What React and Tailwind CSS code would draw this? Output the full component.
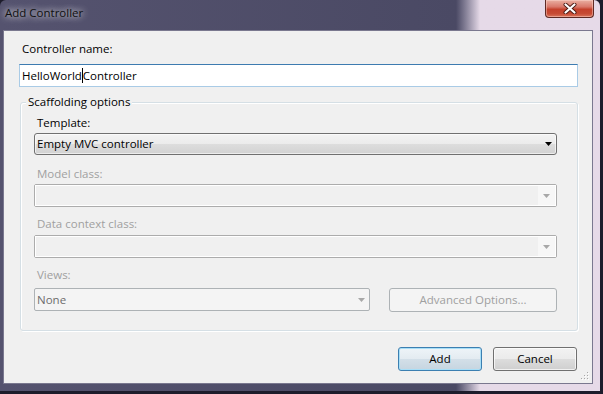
import React from "react";

const font = { fontFamily: '"Open Sans", "Noto Sans", "Liberation Sans", sans-serif' };

function Arrow({ color = "#000" }) {
  return (
    <svg width="7" height="4" viewBox="0 0 7 4" className="shrink-0">
      <path d="M0 0 H7 L3.5 4 Z" fill={color} />
    </svg>
  );
}

function DisabledCombo() {
  return (
    <div className="h-[23px] rounded-[2px] border border-[#acacac] flex">
      <div className="flex-1 border border-white border-r-0 bg-[#f0f0f0]" />
      <div className="w-[18px] border border-white border-l-0 bg-[#f7f7f7] flex items-center justify-center">
        <Arrow color="#a8a8a8" />
      </div>
    </div>
  );
}

export default function App() {
  return (
    <div
      className="w-[603px] h-[394px] bg-[#1d1c2b] overflow-hidden text-[11.5px] text-black"
      style={font}
    >
      <div className="w-[600px] h-[391px] flex flex-col rounded-t-[6px] bg-linear-to-r from-[#55536f] from-0% via-[#4a4964] via-76% to-[#e6dae8] to-80%">
        {/* title bar */}
        <div className="h-[30px] flex items-start justify-between">
          <span className="pl-[5px] pt-[5px] leading-[16px] text-[#101010] [text-shadow:0_0_6px_rgba(255,255,255,0.9),0_0_10px_rgba(255,255,255,0.6)]">
            Add Controller
          </span>
          <div className="mr-[6px] w-[49px] h-[18px] rounded-b-[4px] border border-t-0 border-[#5e2a24] bg-[linear-gradient(180deg,#eab0a2_0%,#d9786a_40%,#c4412c_55%,#c64b34_80%,#d9745c_100%)] shadow-[inset_0_0_0_1px_rgba(255,220,210,0.45)] flex items-center justify-center">
            <svg width="14" height="11" viewBox="0 0 14 11">
              <path d="M2.5 1.5 L11.5 9.5 M11.5 1.5 L2.5 9.5" stroke="#4a1a14" strokeWidth="4" strokeLinecap="round" />
              <path d="M2.5 1.5 L11.5 9.5 M11.5 1.5 L2.5 9.5" stroke="#ffffff" strokeWidth="2.2" strokeLinecap="round" />
            </svg>
          </div>
        </div>

        {/* client area */}
        <div className="ml-[3px] mr-[7px] h-[354px] border border-[#7a788f] bg-[#f0f0f0] relative">
          <div className="flex flex-col pl-[15px] pr-[14px] pt-[10px]">
            <div className="ml-[3px] leading-[16px]">Controller name:</div>
            <div className="mt-[7px] h-[23px] bg-white border border-[#a9cbe6] border-t-[#3d7bb0] flex items-center pl-[2px] leading-[16px]">
              <span>HelloWorld</span>
              <span className="inline-block w-[1px] h-[15px] bg-black" />
              <span>Controller</span>
            </div>

            {/* group box */}
            <div className="mt-[15px] ml-[1px] relative border border-[#d5dfe5] rounded-[3px] shadow-[inset_1px_1px_0_#ffffff,1px_1px_0_#ffffff] pl-[13px] pr-[20px] pt-[12px] pb-[18px] flex flex-col">
              <span className="absolute left-[5px] -top-[9px] px-[2px] bg-[#f0f0f0] leading-[16px]">
                Scaffolding options
              </span>

              <div className="ml-[3px] leading-[16px]">Template:</div>
              <div className="mt-[2px] h-[22px] rounded-[3px] border border-[#707070] bg-[linear-gradient(180deg,#f3f3f3_0%,#ebebeb_50%,#dddddd_50%,#d2d2d2_100%)] shadow-[inset_0_0_0_1px_rgba(255,255,255,0.6)] flex items-center justify-between pl-[2px] pr-[4px]">
                <span className="leading-[16px]">Empty MVC controller</span>
                <Arrow />
              </div>

              <div className="mt-[11px] ml-[3px] leading-[16px] text-[#a0a0a0]">Model class:</div>
              <div className="mt-[2px]">
                <DisabledCombo />
              </div>

              <div className="mt-[9px] ml-[3px] leading-[16px] text-[#a0a0a0]">Data context class:</div>
              <div className="mt-[3px]">
                <DisabledCombo />
              </div>

              <div className="mt-[9px] ml-[3px] leading-[16px] text-[#a0a0a0]">Views:</div>
              <div className="mt-[5px] h-[24px] flex items-start">
                <div className="w-[336px] h-[23px] rounded-[2px] border border-[#adb2b5] bg-[#f4f4f4] flex items-center justify-between pl-[2px] pr-[4px]">
                  <span className="leading-[16px] text-[#6d6d6d]">None</span>
                  <Arrow color="#a8a8a8" />
                </div>
                <div className="ml-[19px] flex-1 h-[24px] rounded-[3px] border border-[#adb2b5] bg-[#f4f4f4] flex items-center justify-center leading-[16px] text-[#a0a0a0]">
                  Advanced Options...
                </div>
              </div>
            </div>

            {/* buttons */}
            <div className="mt-[16px] flex justify-end gap-[11px] pr-[1px]">
              <div className="w-[84px] h-[24px] rounded-[3px] border border-[#3c7fb1] bg-[linear-gradient(180deg,#eef4f8_0%,#e3ebf1_50%,#d3dfe8_50%,#c6d5e0_100%)] shadow-[inset_0_0_0_1px_#a7def7] flex items-center justify-center leading-[16px]">
                Add
              </div>
              <div className="w-[84px] h-[24px] rounded-[3px] border border-[#707070] bg-[linear-gradient(180deg,#f2f2f2_0%,#ebebeb_50%,#dddddd_50%,#cfcfcf_100%)] shadow-[inset_0_0_0_1px_rgba(255,255,255,0.7)] flex items-center justify-center leading-[16px]">
                Cancel
              </div>
            </div>
          </div>

          {/* resize grip */}
          <svg className="absolute right-[2px] bottom-[2px]" width="10" height="10" viewBox="0 0 10 10">
            {[[8, 2], [8, 5], [5, 5], [8, 8], [5, 8], [2, 8]].map(([x, y], i) => (
              <g key={i}>
                <rect x={x} y={y} width="1" height="1" fill="#ffffff" />
                <rect x={x - 1} y={y - 1} width="1" height="1" fill="#a8a8a8" />
              </g>
            ))}
          </svg>
        </div>
      </div>
    </div>
  );
}
